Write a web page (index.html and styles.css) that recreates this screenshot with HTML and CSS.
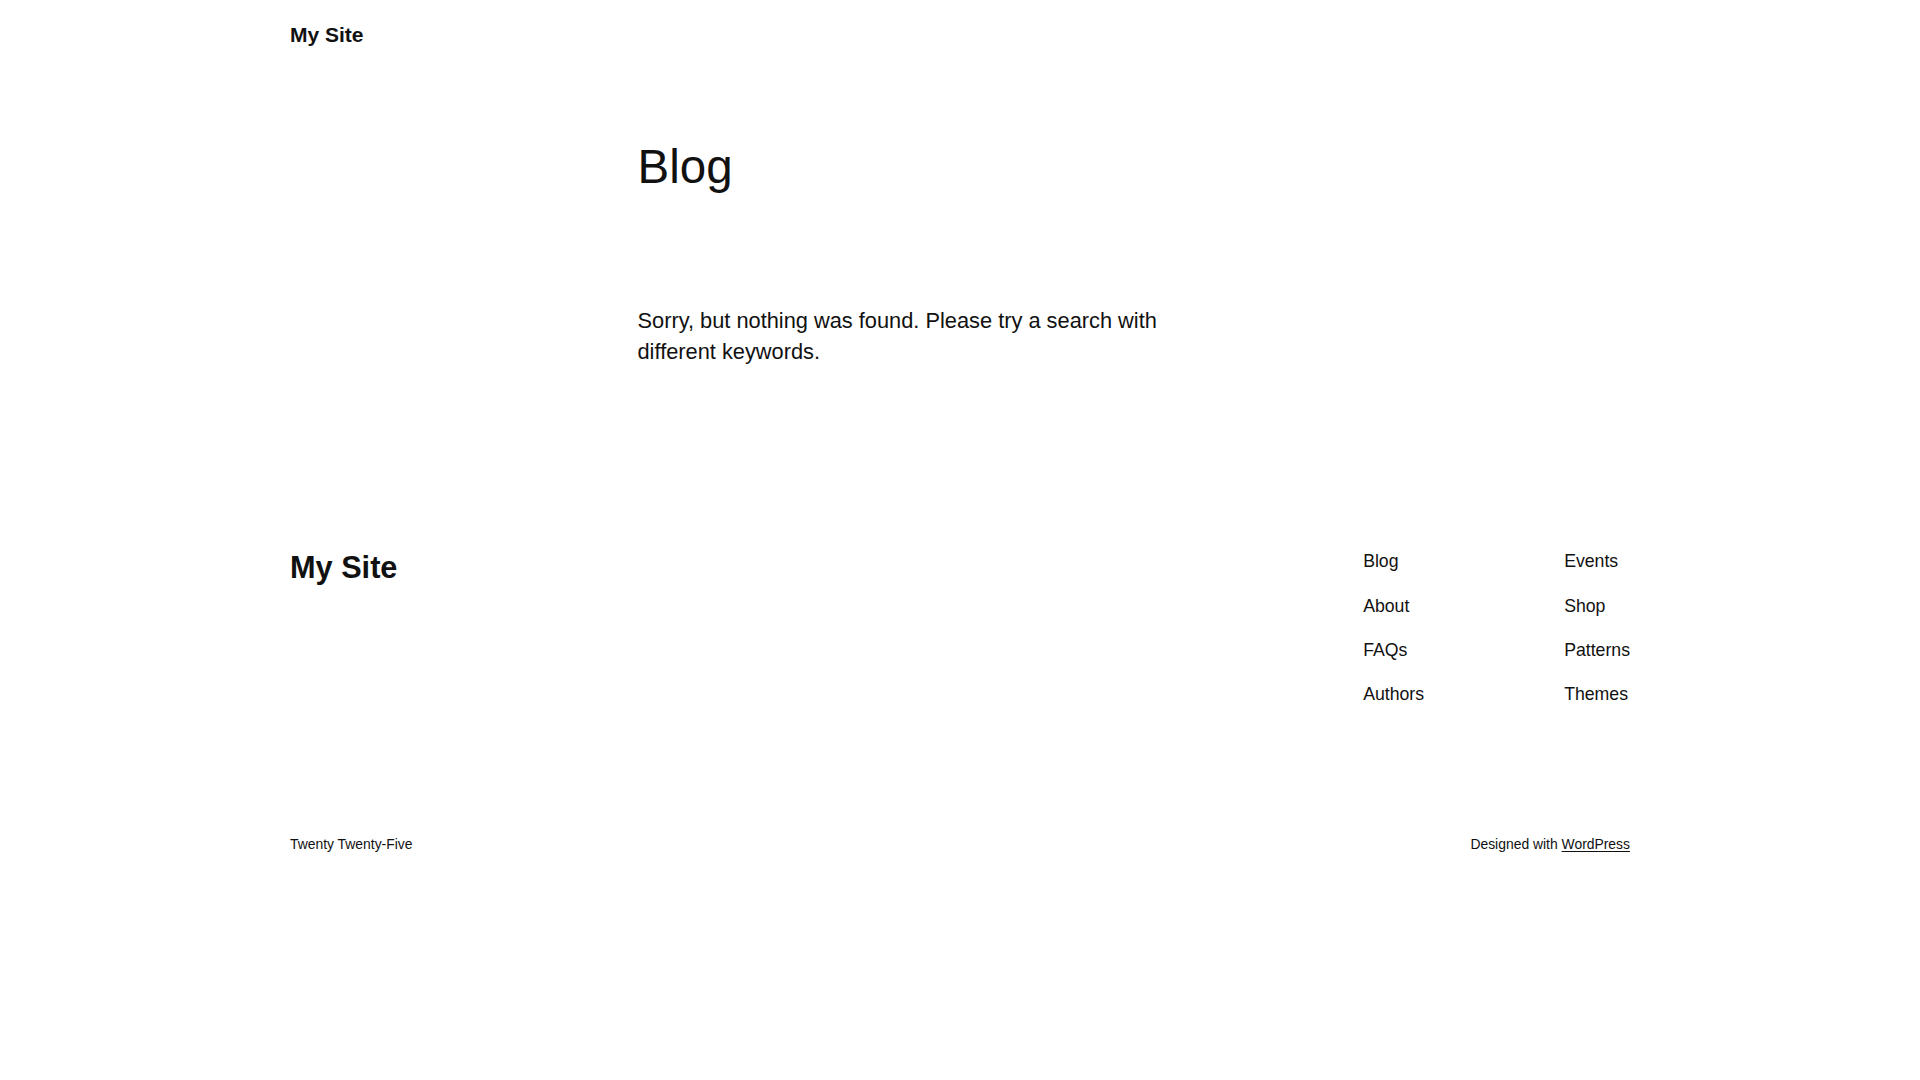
FILE: index.html
```html
<!DOCTYPE html>
<html lang="en">
<head>
<meta charset="utf-8">
<title>Blog – My Site</title>
<link rel="stylesheet" href="styles.css">
</head>
<body>
<header class="site-header">
  <div class="wrap">
    <a class="site-title" href="#">My Site</a>
  </div>
</header>
<main class="site-main">
  <h1 class="page-title">Blog</h1>
  <p class="no-results">Sorry, but nothing was found. Please try a search with different keywords.</p>
</main>
<footer class="site-footer">
  <div class="wrap footer-top">
    <a class="footer-title" href="#">My Site</a>
    <nav class="footer-nav">
      <ul class="nav-col">
        <li><a href="#">Blog</a></li>
        <li><a href="#">About</a></li>
        <li><a href="#">FAQs</a></li>
        <li><a href="#">Authors</a></li>
      </ul>
      <ul class="nav-col">
        <li><a href="#">Events</a></li>
        <li><a href="#">Shop</a></li>
        <li><a href="#">Patterns</a></li>
        <li><a href="#">Themes</a></li>
      </ul>
    </nav>
  </div>
  <div class="wrap footer-bottom">
    <span class="credit">Twenty Twenty-Five</span>
    <span class="credit">Designed with <a href="#" class="wp-link">WordPress</a></span>
  </div>
</footer>
</body>
</html>
```

FILE: styles.css
```css
* { box-sizing: border-box; }
html, body { margin: 0; padding: 0; background: #ffffff; }
body {
  font-family: "Liberation Sans", Arial, sans-serif;
  color: #111111;
}
a { color: #111111; text-decoration: none; }

.wrap {
  width: 1340px;
  margin: 0 auto;
}

.site-header { padding-top: 20px; }
.site-title {
  display: block;
  font-size: 21px;
  font-weight: 700;
  line-height: 29.4px;
}

.site-main {
  width: 645px;
  margin: 0 auto;
  padding-top: 89px;
}
.page-title {
  margin: 0;
  font-size: 47.5px;
  font-weight: 400;
  line-height: 57px;
}
.no-results {
  margin: 109.5px 0 0;
  font-size: 21.8px;
  line-height: 31px;
  max-width: 585px;
}

.site-footer { padding-top: 183px; }
.footer-top {
  display: flex;
  justify-content: space-between;
  align-items: flex-start;
}
.footer-title {
  display: block;
  font-size: 30.7px;
  font-weight: 700;
  line-height: 36px;
}
.footer-nav {
  display: grid;
  grid-template-columns: 201px auto;
  margin-top: -1.5px;
}
.nav-col {
  list-style: none;
  margin: 0;
  padding: 0;
  display: flex;
  flex-direction: column;
  gap: 18.1px;
}
.nav-col li {
  font-size: 17.7px;
  line-height: 26px;
}

.footer-bottom {
  display: flex;
  justify-content: space-between;
  margin-top: 127.5px;
}
.credit {
  font-size: 13.9px;
  line-height: 20px;
}
.wp-link { text-decoration: underline; text-underline-offset: 2px; }
```
